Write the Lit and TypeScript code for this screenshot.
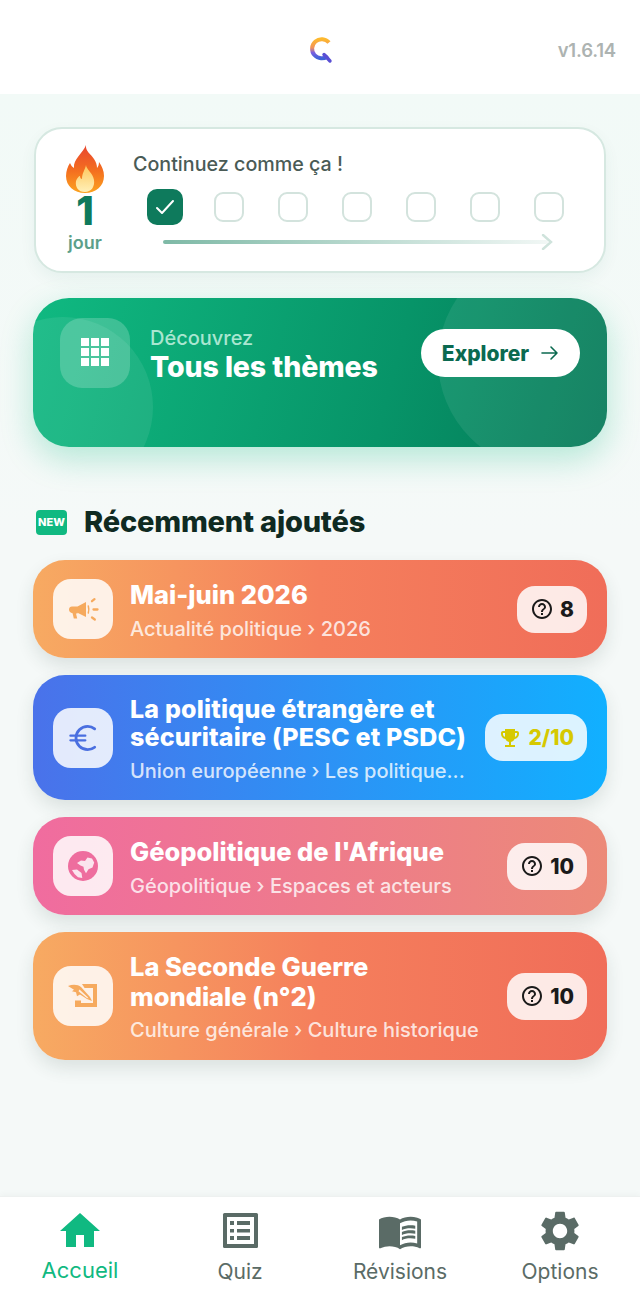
import { LitElement, html, css, svg } from "lit";
import { customElement } from "lit/decorators.js";

const HELP = "M11 18h2v-2h-2v2zm1-16C6.48 2 2 6.48 2 12s4.48 10 10 10 10-4.48 10-10S17.52 2 12 2zm0 18c-4.41 0-8-3.59-8-8s3.59-8 8-8 8 3.59 8 8-3.59 8-8 8zm0-14c-2.21 0-4 1.79-4 4h2c0-1.1.9-2 2-2s2 .9 2 2c0 2-3 1.75-3 5h2c0-2.25 3-2.5 3-5 0-2.21-1.79-4-4-4z";
const TROPHY = "M19 5h-2V3H7v2H5c-1.1 0-2 .9-2 2v1c0 2.55 1.92 4.63 4.39 4.94.63 1.5 1.98 2.63 3.61 2.96V19H7v2h10v-2h-4v-3.1c1.63-.33 2.98-1.46 3.61-2.96C19.08 12.63 21 10.55 21 8V7c0-1.1-.9-2-2-2zM5 8V7h2v3.82C5.84 10.4 5 9.3 5 8zm14 0c0 1.3-.84 2.4-2 2.82V7h2v1z";
const GEAR = "M19.14 12.94c.04-.3.06-.61.06-.94 0-.32-.02-.64-.07-.94l2.03-1.58c.18-.14.23-.41.12-.61l-1.92-3.32c-.12-.22-.37-.29-.59-.22l-2.39.96c-.5-.38-1.03-.7-1.62-.94l-.36-2.54c-.04-.24-.24-.41-.48-.41h-3.84c-.24 0-.43.17-.47.41l-.36 2.54c-.59.24-1.13.57-1.62.94l-2.39-.96c-.22-.08-.47 0-.59.22L2.74 8.87c-.12.21-.08.47.12.61l2.03 1.58c-.05.3-.09.63-.09.94s.02.64.07.94l-2.03 1.58c-.18.14-.23.41-.12.61l1.92 3.32c.12.22.37.29.59.22l2.39-.96c.5.38 1.03.7 1.62.94l.36 2.54c.05.24.24.41.48.41h3.84c.24 0 .44-.17.47-.41l.36-2.54c.59-.24 1.13-.56 1.62-.94l2.39.96c.22.08.47 0 .59-.22l1.92-3.32c.12-.22.07-.47-.12-.61l-2.01-1.58zM12 15.6c-1.98 0-3.6-1.62-3.6-3.6s1.62-3.6 3.6-3.6 3.6 1.62 3.6 3.6-1.62 3.6-3.6 3.6z";
const BOOK = "M21 5c-1.11-.35-2.33-.5-3.5-.5-1.95 0-4.05.4-5.5 1.5-1.45-1.1-3.55-1.5-5.5-1.5S2.45 4.9 1 6v14.65c0 .25.25.5.5.5.1 0 .15-.05.25-.05C3.1 20.45 5.05 20 6.5 20c1.95 0 4.05.4 5.5 1.5 1.35-.85 3.8-1.5 5.5-1.5 1.65 0 3.35.3 4.75 1.05.1.05.15.05.25.05.25 0 .5-.25.5-.5V6c-.6-.45-1.25-.75-2-1zm0 13.5c-1.1-.35-2.3-.5-3.5-.5-1.7 0-4.15.65-5.5 1.5V8c1.35-.85 3.8-1.5 5.5-1.5 1.2 0 2.4.15 3.5.5v11.5z";
const BOOKLINES = "M17.5 10.5c.88 0 1.73.09 2.5.26V9.24c-.79-.15-1.64-.24-2.5-.24-1.7 0-3.24.29-4.5.83v1.66c1.13-.64 2.7-.99 4.5-.99zM13 12.49v1.66c1.13-.64 2.7-.99 4.5-.99.88 0 1.73.09 2.5.26V11.9c-.79-.15-1.64-.24-2.5-.24-1.7 0-3.24.3-4.5.83zM17.5 14.33c-1.7 0-3.24.29-4.5.83v1.66c1.13-.64 2.7-.99 4.5-.99.88 0 1.73.09 2.5.26v-1.52c-.79-.16-1.64-.24-2.5-.24z";

const icons = {
  mega: svg`<path fill="currentColor" d="M1 12.500c0-1.800 1.300-3 3-3H9.500L18 5v15l-8.500-4.200v.7H8l1.200 5H5.800l-1.200-5.300C2.500 16 1 14.500 1 12.500z"/><path fill="none" stroke="currentColor" stroke-width="1.500" stroke-linecap="round" d="M20.300 9c.7 2.300.7 4.700 0 7"/><path fill="none" stroke="currentColor" stroke-width="2.300" stroke-linecap="round" d="M24 4.200 26.500 2.200M25.500 12.500h4M24 20.500l2.800 2"/>`,
  euro: svg`<path fill="none" stroke="currentColor" stroke-width="3" stroke-linecap="round" d="M27.500 5.200A12.500 12.500 0 0 0 20 2.500C13 2.500 7.500 8 7.500 15S13 27.500 20 27.500c2.800 0 5.400-.9 7.500-2.600"/><path fill="none" stroke="currentColor" stroke-width="2.400" stroke-linecap="round" d="M1.500 12.500h16M1.500 17.500h16"/>`,
  globe: svg`<circle cx="15" cy="15" r="15" fill="currentColor"/><path fill="#fbe4ee" d="M12.500 14.500 9 12l4-2.500 4 .5 2.500-3.500 4.500 1 2.200 4-1.700 5-4 1.800-2.500 4-2-3.500-.5-3zM4 19l5-.5 4.500 3.500.8 5-4.300-.8-3.500-3.200z"/>`,
  scroll: svg`<path fill="currentColor" d="M10 1h19v23H7v-6.500h6V20h12V5H14z"/><path fill="#fdf0e6" d="M-1 1h15l11 17-8-1-8-2-4-4-4-5z"/><path fill="currentColor" d="M0 3c5-2 10-1.500 13 1l9 10 2 4-5-2-7-4.500-3 1.800-1-4-4-1 2-1.500z"/><path fill="#fdf0e6" d="M11.500 6.500 19.500 14l1 1.600-2-.8-8-6.500z"/>`,
} as const;

const cards = [
  { tone: "sunset", icon: "mega", title: ["Mai-juin 2026"], sub: "Actualité politique › 2026", badge: "8", vb: "0 0 31 25", w: 31, h: 25 },
  { tone: "ocean", icon: "euro", title: ["La politique étrangère et", "sécuritaire (PESC et PSDC)"], sub: "Union européenne › Les politique...", badge: "2/10", trophy: true, compact: true, vb: "0 0 30 30", w: 28, h: 28 },
  { tone: "rose", icon: "globe", title: ["Géopolitique de l'Afrique"], sub: "Géopolitique › Espaces et acteurs", badge: "10", vb: "0 0 30 30", w: 30, h: 30 },
  { tone: "sunset", icon: "scroll", title: ["La Seconde Guerre", "mondiale (n°2)"], sub: "Culture générale › Culture historique", badge: "10", vb: "0 0 30 25", w: 30, h: 25 },
];

@customElement("app-root")
export class AppRoot extends LitElement {
  static styles = css`
    :host { display: block; height: 1294px; font-family: "Inter", "Noto Sans", sans-serif; background: #f4f9f7; overflow: hidden; }
    .page { height: 1294px; display: flex; flex-direction: column; }
    header { height: 94px; flex: none; background: #fff; display: grid; grid-template-columns: 1fr auto 1fr; align-items: center; padding: 0 24px; box-sizing: border-box; }
    .logo { grid-column: 2; display: block; margin-top: 5px; }
    .ver { grid-column: 3; justify-self: end; font-size: 18.500px; font-weight: 600; color: #adb3b1; letter-spacing: -0.2px; margin-top: 6px; }
    main { flex: 1; min-height: 0; padding: 33px 33px 0; background: linear-gradient(#f2faf7, #f5f9f8 40%); }

    .streak { margin: 0 1px 25px; height: 146px; box-sizing: border-box; background: #fff; border: 2px solid #d6e8e1; border-radius: 28px; box-shadow: 0 6px 16px rgba(16,110,80,.06); display: flex; padding: 16px 0 0 24px; }
    .day { width: 50px; flex: none; display: flex; flex-direction: column; align-items: center; }
    .flame { display: block; }
    .num { font-size: 40px; line-height: 33px; font-weight: 800; color: #0e7a5c; margin-top: 1px; }
    .jour { font-size: 18px; line-height: 20px; font-weight: 600; color: #5c9f8a; margin-top: 6px; }
    .prog { margin-left: 23px; flex: 1; }
    .msg { font-size: 19.700px; line-height: 22px; font-weight: 500; color: #4a5b56; margin-top: 8px; white-space: nowrap; }
    .boxes { display: flex; align-items: center; margin: 14px 0 0 14px; height: 36px; }
    .done { width: 36px; height: 36px; border-radius: 10px; background: #0e7a5c; display: flex; align-items: center; justify-content: center; }
    .box { width: 30px; height: 30px; box-sizing: border-box; border: 2px solid #d3e3dd; border-radius: 9px; margin-left: 34px; }
    .done + .box { margin-left: 31px; }
    .trail { margin: 7px 0 0 30px; width: 390px; height: 20px; display: flex; align-items: center; position: relative; }
    .line { width: 385px; height: 4px; border-radius: 2px; background: linear-gradient(90deg, #7eb9a6, #f1f7f5); }
    .head { position: absolute; right: 0; top: 2px; }

    .banner { position: relative; overflow: hidden; height: 149px; box-sizing: border-box; border-radius: 36px; background: linear-gradient(105deg, #10b981, #079468 62%, #047857); box-shadow: 0 12px 32px rgba(16,185,129,.28); padding: 20px 27px; display: flex; align-items: flex-start; }
    .blob { position: absolute; border-radius: 50%; background: rgba(255,255,255,.08); }
    .b1 { width: 220px; height: 220px; top: -48px; right: -51px; }
    .b2 { width: 180px; height: 180px; bottom: -50px; left: -60px; }
    .tile9 { position: relative; width: 70px; height: 70px; flex: none; border-radius: 22px; background: rgba(255,255,255,.2); display: flex; align-items: center; justify-content: center; }
    .grid9 { display: grid; grid-template-columns: repeat(3, 8px); grid-auto-rows: 8px; gap: 2px; margin-top: -2px; }
    .grid9 i { background: #fff; display: block; }
    .btext { position: relative; margin: 9px 0 0 20px; flex: 1; display: flex; flex-direction: column; }
    .disc { font-size: 20px; line-height: 22px; font-weight: 500; color: #a9e6d0; }
    .all { font-size: 28.500px; line-height: 36px; font-weight: 800; color: #fff; letter-spacing: -.1px; white-space: nowrap; }
    .explore { position: relative; margin-top: 11px; height: 48px; width: 159px; flex: none; box-sizing: border-box; background: #fff; border-radius: 24px; display: flex; align-items: center; justify-content: center; gap: 12px; font-size: 21px; font-weight: 800; color: #0b6a50; }

    .rec { margin-top: 56px; height: 36px; display: flex; align-items: center; gap: 17px; padding-left: 3px; }
    .new { width: 31px; height: 25px; border-radius: 4px; background: #10b981; color: #fff; font-size: 11px; font-weight: 800; display: flex; align-items: center; justify-content: center; margin-top: 2px; }
    h2 { margin: 0; font-size: 29px; font-weight: 800; color: #0f2a22; letter-spacing: -.2px; white-space: nowrap; }
    .list { margin-top: 21px; display: flex; flex-direction: column; gap: 17px; }
    .card { border-radius: 32px; padding: 20px 20px 16.500px; display: flex; align-items: center; gap: 17px; color: #fff; box-shadow: 0 8px 18px rgba(30,60,50,.12); }
    .sunset { background: linear-gradient(90deg, #f7aa62, #f57f5c 50%, #f06d59); }
    .ocean { background: linear-gradient(90deg, #4a72ea, #11b0ff); }
    .rose { background: linear-gradient(90deg, #f06c9f, #ec8a78); }
    .tile { width: 60px; height: 60px; flex: none; border-radius: 18px; background: rgba(255,255,255,.85); display: flex; align-items: center; justify-content: center; margin-top: -3.500px; }
    .sunset .tile { color: #f6aa5e; }
    .ocean .tile { color: #4a6fe0; }
    .rose .tile { color: #ee6d9e; }
    .txt { flex: 1; min-width: 0; }
    .t { font-size: 25.500px; line-height: 29.500px; font-weight: 800; white-space: nowrap; }
    .compact .t { font-size: 25px; line-height: 28.250px; letter-spacing: .2px; }
    .s { font-size: 20px; line-height: 26px; margin-top: 6px; font-weight: 500; color: rgba(255,255,255,.8); white-space: nowrap; }
    .badge { flex: none; height: 47px; padding: 0 13px; box-sizing: border-box; border-radius: 18px; background: rgba(255,255,255,.85); display: flex; align-items: center; gap: 6px; font-size: 21px; font-weight: 800; color: #1a1a1a; margin-top: -3px; }
    .badge.win { color: #d6c900; }

    nav { flex: none; height: 98px; background: #fff; border-top: 1px solid #eef1f0; box-shadow: 0 -2px 6px rgba(0,0,0,.03); display: grid; grid-template-columns: repeat(4, 1fr); box-sizing: border-box; }
    .tab { display: flex; flex-direction: column; align-items: center; color: #5a6b66; font-size: 21px; line-height: 26px; }
    .tab svg { display: block; margin-top: 13px; height: 42px; }
    .tab span { margin-top: 7px; }
    .tab.on { color: #10b981; font-size: 22px; }
    .tab.on span { margin-top: 5px; }
  `;

  private card(c: (typeof cards)[number]) {
    return html`<div class="card ${c.tone} ${c.compact ? "compact" : ""}">
      <div class="tile"><svg width=${c.w} height=${c.h} viewBox=${c.vb}>${icons[c.icon as keyof typeof icons]}</svg></div>
      <div class="txt">
        ${c.title.map((l) => html`<div class="t">${l}</div>`)}
        <div class="s">${c.sub}</div>
      </div>
      <div class="badge ${c.trophy ? "win" : ""}">
        <svg width="24" height="24" viewBox="0 0 24 24" fill="currentColor"><path d=${c.trophy ? TROPHY : HELP}></path></svg>
        ${c.badge}
      </div>
    </div>`;
  }

  render() {
    return html`<div class="page">
      <header>
        <svg class="logo" width="26" height="28" viewBox="0 0 26 28">
          <defs><linearGradient id="lg" x1="0" y1="0" x2="0" y2="1"><stop offset="0" stop-color="#fdb92e"/><stop offset=".45" stop-color="#f2925a"/><stop offset=".7" stop-color="#7a5fe0"/><stop offset="1" stop-color="#3f63d8"/></linearGradient></defs>
          <path d="M22 6.500A9.600 9.600 0 1 0 21 20" fill="none" stroke="url(#lg)" stroke-width="4" stroke-linecap="butt"/>
          <path d="M17 18.500 23 25" stroke="#5a4fd4" stroke-width="3.400" stroke-linecap="round"/>
        </svg>
        <div class="ver">v1.6.14</div>
      </header>
      <main>
        <section class="streak">
          <div class="day">
            <svg class="flame" width="38" height="48" viewBox="0 0 38 48">
              <defs>
                <linearGradient id="f1" x1="0" y1="0" x2="0" y2="1"><stop offset="0" stop-color="#e8452f"/><stop offset=".55" stop-color="#f4701f"/><stop offset="1" stop-color="#fca320"/></linearGradient>
                <linearGradient id="f2" x1="0" y1="0" x2="0" y2="1"><stop offset="0" stop-color="#fdc65a"/><stop offset="1" stop-color="#fff0b8"/></linearGradient>
              </defs>
              <path fill="url(#f1)" d="M20 0C19 6 25 9 28 14C30 17 31 20 31 23C32 22 33 20 33 17C36 21 38 26 38 31C38 41 30 48 19 48C8 48 0 41 0 31C0 26 2 21 4 18C5 20 6 22 8 23C7 14 17 8 20 0z"/>
              <path fill="url(#f2)" d="M20 20C20 24 27 28 28 35C29 42 25 47 19 47C12 47 9 42 10 36C11 33 13 31 14 31C14 33 15 34 16 34C16 28 19 25 20 20z"/>
            </svg>
            <div class="num">1</div>
            <div class="jour">jour</div>
          </div>
          <div class="prog">
            <div class="msg">Continuez comme ça !</div>
            <div class="boxes">
              <div class="done"><svg width="20" height="16" viewBox="0 0 20 16" fill="none" stroke="#fff" stroke-width="2" stroke-linecap="round" stroke-linejoin="round"><path d="M2 9l5 5L18 2"/></svg></div>
              ${[0, 1, 2, 3, 4, 5].map(() => html`<div class="box"></div>`)}
            </div>
            <div class="trail">
              <div class="line"></div>
              <svg class="head" width="12" height="16" viewBox="0 0 12 16" fill="none" stroke="#cfe3dc" stroke-width="2.400" stroke-linecap="round"><path d="M2 1l8 7-8 7"/></svg>
            </div>
          </div>
        </section>

        <section class="banner">
          <div class="blob b1"></div>
          <div class="blob b2"></div>
          <div class="tile9"><div class="grid9">${Array.from({ length: 9 }, () => html`<i></i>`)}</div></div>
          <div class="btext">
            <div class="disc">Découvrez</div>
            <div class="all">Tous les thèmes</div>
          </div>
          <div class="explore">Explorer
            <svg width="18" height="18" viewBox="0 0 18 18" fill="none" stroke="#0b6a50" stroke-width="1.600" stroke-linecap="round" stroke-linejoin="round"><path d="M1 9h15M10 3l6 6-6 6"/></svg>
          </div>
        </section>

        <div class="rec"><div class="new">NEW</div><h2>Récemment ajoutés</h2></div>
        <div class="list">${cards.map((c) => this.card(c))}</div>
      </main>
      <nav>
        <div class="tab on">
          <svg width="40" height="42" viewBox="2 2 20 20" fill="currentColor"><path d="M10 20v-6h4v6h5v-8h3L12 3 2 12h3v8z"/></svg>
          <span>Accueil</span>
        </div>
        <div class="tab">
          <svg width="42" height="42" viewBox="0 0 42 42"><rect x="4" y="3" width="35" height="35" rx="1.500" fill="currentColor"/><rect x="8" y="7" width="27" height="27" fill="#fff"/><path fill="currentColor" d="M11 11h4v4h-4zM18 11h13v4H18zM11 19h4v3.500h-4zM18 19h13v3.500H18zM11 26h4v4h-4zM18 26h13v4H18z"/></svg>
          <span>Quiz</span>
        </div>
        <div class="tab">
          <svg width="46" height="42" viewBox="0 1 24 22" fill="currentColor"><path d=${BOOK}></path><path d=${BOOKLINES}></path></svg>
          <span>Révisions</span>
        </div>
        <div class="tab">
          <svg width="40" height="42" viewBox="2 2 20 20" fill="currentColor"><path d=${GEAR}></path></svg>
          <span>Options</span>
        </div>
      </nav>
    </div>`;
  }
}
